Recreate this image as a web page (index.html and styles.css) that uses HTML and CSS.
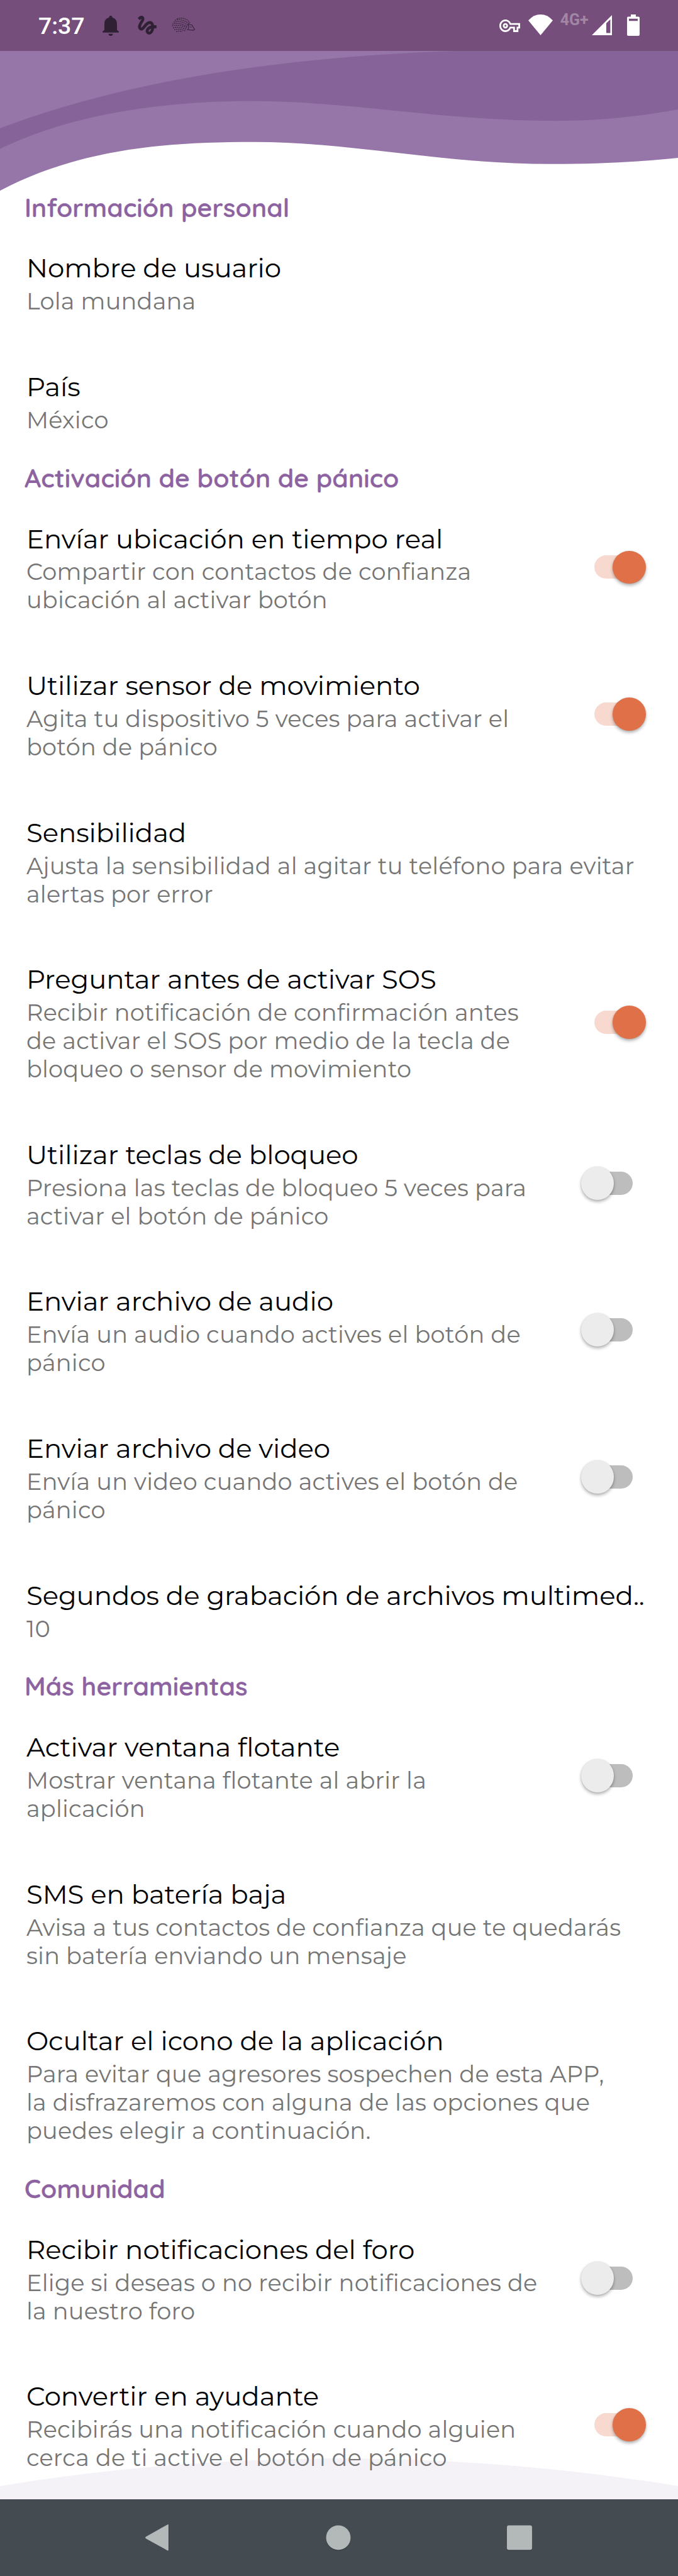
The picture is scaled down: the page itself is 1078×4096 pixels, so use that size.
FILE: index.html
```
<!DOCTYPE html>
<html lang="es">
<head>
<meta charset="utf-8">
<title>Configuración</title>
<link rel="stylesheet" href="styles.css">
</head>
<body>
<header class="top">
  <div class="status">
    <span class="time">7:37</span>
    <svg class="i-bell" viewBox="0 0 26 33" preserveAspectRatio="none"><path d="M13 0a2.6 2.6 0 0 1 2.6 2.6v.6C20.300 4.300 23 7.800 23 13v10l3 3v1.700H0V26l3-3V13C3 7.800 5.700 4.300 10.400 3.200v-.6A2.600 2.600 0 0 1 13 0zM9.600 29.700h6.800a3.400 3.400 0 0 1-6.800 0z"/></svg>
    <svg class="i-gesture" viewBox="2.600 2.800 18.600 18.400" preserveAspectRatio="none"><path d="M4.590 6.890c.7-.71 1.400-1.350 1.710-1.220.5.2 0 1.030-.3 1.520-.25.42-2.860 3.890-2.860 6.310 0 1.280.48 2.340 1.340 2.980.75.56 1.740.73 2.640.46 1.070-.31 1.950-1.400 3.060-2.770 1.210-1.490 2.830-3.440 4.080-3.440 1.630 0 1.650 1.010 1.760 1.790-3.780.64-5.380 3.670-5.380 5.370 0 1.700 1.440 3.090 3.210 3.090 1.630 0 4.290-1.330 4.690-6.100H21v-2.500h-2.470c-.15-1.650-1.090-4.200-4.030-4.200-2.250 0-4.180 1.910-4.940 2.840-.58.73-2.060 2.480-2.290 2.720-.25.3-.68.84-1.110.84-.45 0-.72-.83-.36-1.920.35-1.090 1.400-2.860 1.850-3.520.78-1.140 1.300-1.920 1.300-3.280C8.950 3.690 7.310 3 6.440 3 5.120 3 3.970 4 3.720 4.250c-.36.36-.66.66-.88.93l1.750 1.710zm9.290 11.660c-.31 0-.74-.26-.74-.72 0-.6.73-2.200 2.870-2.760-.3 2.690-1.430 3.480-2.130 3.480z"/></svg>
    <svg class="i-hog" viewBox="0 0 38 24"><g class="quills"><path d="M9 2C15-.5 22 1 27 4.500L30 9"/><path d="M6 4.500C13 2 21 3.500 28.500 10"/><path d="M4 7.500C11 5 20 6.500 26.500 12"/><path d="M2 10.500C9 8 18 9.500 26 14.500"/><path d="M1.500 13.500C9 11 18 12.500 26 16.500"/><path d="M3 16.500C9 14.500 17 15.500 25 19"/><path d="M5 19.500C11 17.500 16 18.500 23 21.500"/><path d="M8 22.500C12 21 15 21.500 18 22.500"/></g><path class="face" d="M27 11l6 .5L37.500 19l-2 1.200-9-.8c2-2.500 2.200-5.500.5-8.400z"/><circle cx="31.500" cy="15" r=".8"/></svg>
    <svg class="i-key" viewBox="0 5 24 14" preserveAspectRatio="none"><path d="M22 19h-6v-4h-2.680c-1.140 2.420-3.600 4-6.320 4-3.860 0-7-3.140-7-7s3.140-7 7-7c2.720 0 5.170 1.580 6.320 4H24v6h-2v4zm-4-2h2v-4h2v-2H11.940l-.23-.67C11.010 8.340 9.110 7 7 7c-2.760 0-5 2.240-5 5s2.240 5 5 5c2.110 0 4.010-1.340 4.710-3.330l.23-.67H18v4zM7 15c-1.650 0-3-1.350-3-3s1.350-3 3-3 3 1.350 3 3-1.350 3-3 3zm0-4c-.55 0-1 .45-1 1s.45 1 1 1 1-.45 1-1-.45-1-1-1z"/></svg>
    <svg class="i-wifi" viewBox="0 0 39 34" preserveAspectRatio="none"><path d="M0 9.800Q8.500 0 19.500 0T39 9.800L19.500 34z"/></svg>
    <span class="net">4G+</span>
    <svg class="i-signal" viewBox="0 0 33 34" preserveAspectRatio="none"><path fill-rule="evenodd" d="M33 0v34H0zM23 14.500L29.500 8V30.500H23z"/></svg>
    <svg class="i-battery" viewBox="0 0 20 35" preserveAspectRatio="none"><path fill-rule="evenodd" d="M6 0h8v3.500h4a2 2 0 0 1 2 2V33a2 2 0 0 1-2 2H2a2 2 0 0 1-2-2V5.500a2 2 0 0 1 2-2h4zM3 7v3.500h14V7z"/></svg>
  </div>
  <svg class="wave" viewBox="0 84 1080 230" preserveAspectRatio="none">
    <path class="light" d="M0 84V313.500C130 243 270 233.500 403 233.500C560 233.500 700 269.600 877 269.600C950 269.600 1010 267 1080 259.600V84z"/>
    <path class="dark" d="M0 211C180 141 420 92 760 83H1080V180C1020 191 960 198.800 888 198.800C700 198.800 560 166.500 403 166.500C250 166.500 110 190 0 245z"/>
  </svg>
</header>

<main class="list">
  <h2>Información personal</h2>
  <section class="item"><div class="text"><h3>Nombre de usuario</h3><p>Lola mundana</p></div></section>
  <section class="item"><div class="text"><h3>País</h3><p>México</p></div></section>

  <h2>Activación de botón de pánico</h2>
  <section class="item"><div class="text"><h3>Envíar ubicación en tiempo real</h3><p>Compartir con contactos de confianza<br>ubicación al activar botón</p></div><i class="switch on"></i></section>
  <section class="item"><div class="text"><h3>Utilizar sensor de movimiento</h3><p>Agita tu dispositivo 5 veces para activar el<br>botón de pánico</p></div><i class="switch on"></i></section>
  <section class="item"><div class="text"><h3>Sensibilidad</h3><p>Ajusta la sensibilidad al agitar tu teléfono para evitar<br>alertas por error</p></div></section>
  <section class="item"><div class="text"><h3>Preguntar antes de activar SOS</h3><p>Recibir notificación de confirmación antes<br>de activar el SOS por medio de la tecla de<br>bloqueo o sensor de movimiento</p></div><i class="switch on"></i></section>
  <section class="item"><div class="text"><h3>Utilizar teclas de bloqueo</h3><p>Presiona las teclas de bloqueo 5 veces para<br>activar el botón de pánico</p></div><i class="switch"></i></section>
  <section class="item"><div class="text"><h3>Enviar archivo de audio</h3><p>Envía un audio cuando actives el botón de<br>pánico</p></div><i class="switch"></i></section>
  <section class="item"><div class="text"><h3>Enviar archivo de video</h3><p>Envía un video cuando actives el botón de<br>pánico</p></div><i class="switch"></i></section>
  <section class="item"><div class="text"><h3>Segundos de grabación de archivos multimed..</h3><p>10</p></div></section>

  <h2>Más herramientas</h2>
  <section class="item"><div class="text"><h3>Activar ventana flotante</h3><p>Mostrar ventana flotante al abrir la<br>aplicación</p></div><i class="switch"></i></section>
  <section class="item"><div class="text"><h3>SMS en batería baja</h3><p>Avisa a tus contactos de confianza que te quedarás<br>sin batería enviando un mensaje</p></div></section>
  <section class="item"><div class="text"><h3>Ocultar el icono de la aplicación</h3><p>Para evitar que agresores sospechen de esta APP,<br>la disfrazaremos con alguna de las opciones que<br>puedes elegir a continuación.</p></div></section>

  <h2>Comunidad</h2>
  <section class="item"><div class="text"><h3>Recibir notificaciones del foro</h3><p>Elige si deseas o no recibir notificaciones de<br>la nuestro foro</p></div><i class="switch"></i></section>
  <section class="item"><div class="text"><h3>Convertir en ayudante</h3><p>Recibirás una notificación cuando alguien<br>cerca de ti active el botón de pánico</p></div><i class="switch on"></i></section>
  <svg class="hill" viewBox="0 0 1080 65"><path d="M0 44Q540-44 1080 44V65H0z"/></svg>
</main>

<nav class="nav">
  <svg viewBox="0 0 48 48"><path class="sh" d="M43 4.500v39L5 24z"/><path d="M39.500 3.700Q42 2 42 4.500V43q0 2.500-2.500 1L6 25.500q-1.800-1.500 0-3z"/></svg>
  <svg viewBox="0 0 48 48"><circle class="sh" cx="24" cy="25.500" r="19.500"/><circle cx="24" cy="24" r="19.500"/></svg>
  <svg viewBox="0 0 48 48"><rect class="sh" x="4" y="6" width="40" height="39" rx="3"/><rect x="4" y="4.500" width="40" height="39" rx="3"/></svg>
</nav>
</body>
</html>
```
FILE: styles.css
```
* { box-sizing: border-box; }

html { zoom: 0.9984; }

body {
  margin: 0;
  width: 1080px;
  height: 4103px;
  overflow: hidden;
  display: flex;
  flex-direction: column;
  background: #fff;
  font-family: Montserrat, Inter, "Open Sans", sans-serif;
}

h2, h3, p { margin: 0; font-weight: 400; white-space: nowrap; }

/* Status bar and wave */
.top { height: 304px; flex: none; }

.status {
  height: 81px;
  padding: 0 61px;
  display: flex;
  align-items: flex-start;
  background: #764e7b;
  fill: #2f2033;
}

.status svg { flex: none; }

.time {
  width: 72px;
  margin-top: 19px;
  font: 500 37.500px/45px Roboto, sans-serif;
  color: #fff;
}

.i-bell { width: 26px; height: 32px; margin: 25px 0 0 30px; }
.i-gesture { width: 30px; height: 30px; margin: 25px 0 0 30px; stroke: #2f2033; stroke-width: .4; }
.i-hog { width: 38px; height: 24px; margin: 28px auto 0 24px; }
.quills { fill: none; stroke: #37263c; stroke-width: 1.300; stroke-dasharray: 2 1.200; }
.face { fill: none; stroke: #37263c; stroke-width: 1.200; }
.i-key { width: 33px; height: 20px; margin: 31px 0 0; fill: #fff; }
.i-wifi { width: 39px; height: 33px; margin: 23px 0 0 13px; fill: #fff; }
.net { width: 45px; margin: 17px 0 0 12px; font: 700 25px/30px Roboto, sans-serif; color: #a286a6; }
.i-signal { width: 33px; height: 33px; margin: 23px 0 0 5px; fill: #fff; }
.i-battery { width: 20px; height: 34px; margin: 23px 0 0 24px; fill: #fff; }

.wave { display: block; width: 1080px; height: 223px; }
.light { fill: #9676a8; }
.dark { fill: #86649a; }

/* Preference list */
.list { position: relative; flex: none; height: 3676px; }

h2 {
  height: 53px;
  padding-left: 39px;
  font: 600 41px/53px Quicksand, Inter, sans-serif;
  letter-spacing: .15px;
  -webkit-text-stroke: .4px #8c62a0;
  color: #8c62a0;
}

.item {
  position: relative;
  z-index: 1;
  display: flex;
  justify-content: space-between;
  align-items: center;
  padding: 45px 51px 43px 42px;
}

h3 { font-size: 42px; line-height: 51px; letter-spacing: -.06px; color: #000; }

p {
  margin-top: 5px;
  font-size: 36.750px;
  line-height: 45px;
  letter-spacing: .23px;
  color: #757575;
}

.switch {
  flex: none;
  position: relative;
  width: 83px;
  height: 53px;
  margin-bottom: 5px;
  display: flex;
  align-items: center;
}

.switch::before {
  content: "";
  width: 62px;
  height: 37px;
  border-radius: 19px;
  background: #bdbdbd;
}

.switch::after {
  content: "";
  position: absolute;
  left: -21px;
  top: 0;
  width: 53px;
  height: 53px;
  border-radius: 50%;
  background: #ececec;
  box-shadow: 0 3px 5px rgba(0, 0, 0, .3), 0 0 2px rgba(0, 0, 0, .12);
}

.switch.on::before { background: #f7d9cf; }
.switch.on::after { left: 30px; background: #e07048; }

.hill { position: absolute; left: 0; bottom: 0; width: 1080px; height: 65px; fill: #f4f2f6; }

/* Navigation bar */
.nav {
  flex: 1;
  padding: 0 229px 0 226px;
  display: flex;
  justify-content: space-between;
  align-items: center;
  background: #444c52;
  fill: #b3b8b9;
}

.nav svg { width: 48px; height: 48px; }
.sh { fill: #000; opacity: .2; }
```
